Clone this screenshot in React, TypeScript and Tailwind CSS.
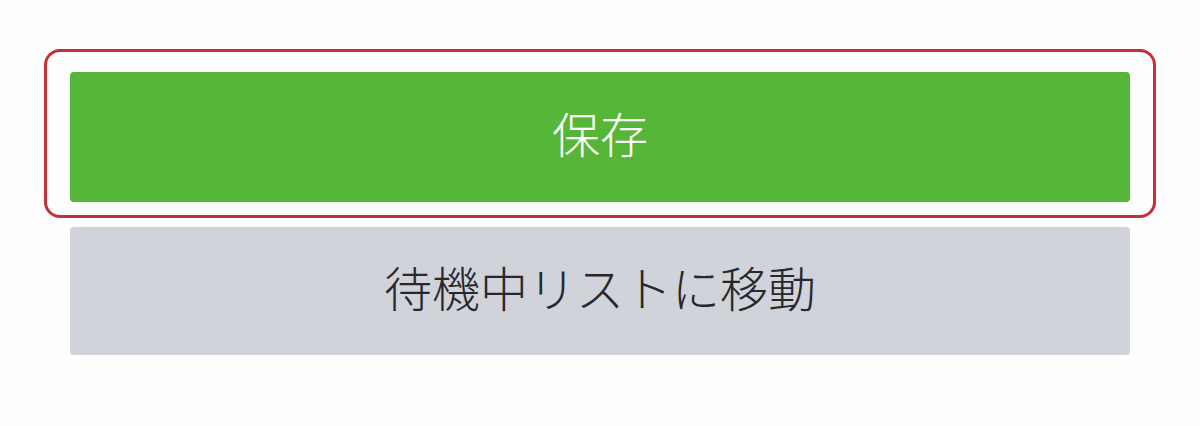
export default function App() {
  return (
    <div
      className="w-[1200px] h-[426px] bg-[#fdfdfd] pt-[49px]"
      style={{ fontFamily: '"Noto Sans CJK JP", "Noto Sans", sans-serif' }}
    >
      {/* highlighted save button */}
      <div className="mx-[44px] border-[3px] border-[#c42f38] rounded-[16px] pt-[20px] pb-[13px] px-[23px]">
        <button className="w-full h-[130px] pb-[10px] rounded-[4px] bg-[#55b637] text-white text-[48px] font-light leading-none flex items-center justify-center">
          保存
        </button>
      </div>

      <button className="mt-[9px] ml-[70px] w-[1060px] h-[128px] pb-[10px] rounded-[4px] bg-[#d0d3da] text-[#26282c] text-[48px] font-light leading-none flex items-center justify-center">
        待機中リストに移動
      </button>
    </div>
  );
}
